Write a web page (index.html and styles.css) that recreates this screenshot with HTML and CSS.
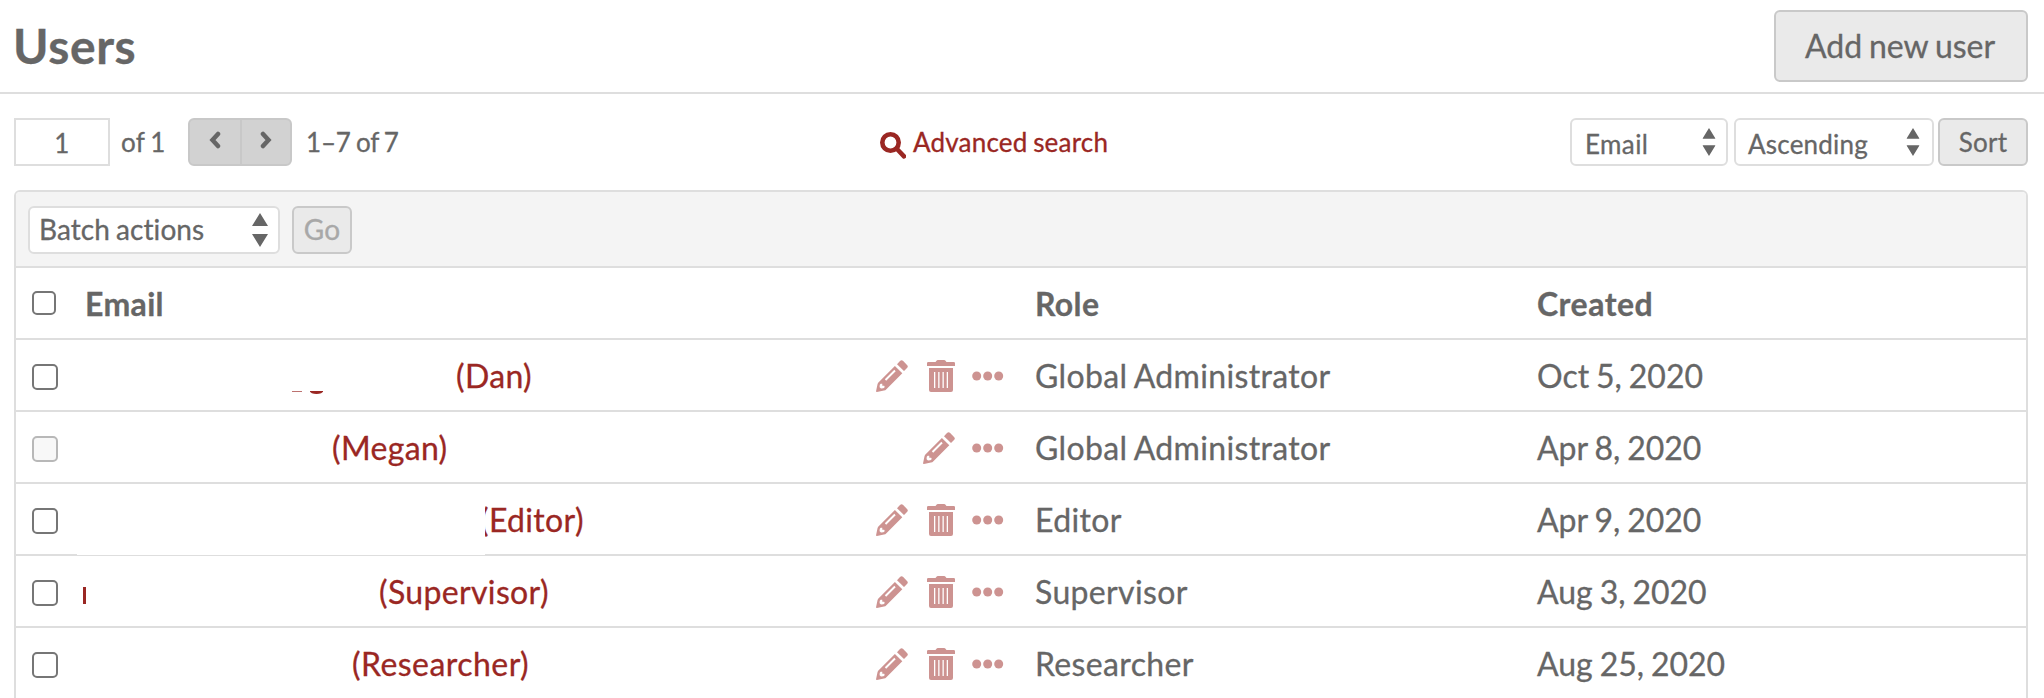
FILE: index.html
```html
<!DOCTYPE html>
<html lang="en">
<head>
<meta charset="utf-8">
<title>Users</title>
<link rel="stylesheet" href="styles.css">
</head>
<body>
<svg class="defs" width="0" height="0">
  <symbol id="pencil" viewBox="0 0 32 32">
    <path d="M21 4.2 24 1.1Q25.6-.4 27.2 1.1L31 4.9Q32.6 6.5 31 8.1L28 11.1Z"/>
    <path fill-rule="evenodd" d="M18.9 6 26.3 13.3 10.4 29.2Q9.4 30.3 8 30.6L.9 32Q0 32.1.1 31.1L1.5 24.300Q1.800 23 2.900 22ZM18.300 9.800 8.800 19.300 10.200 20.700 19.700 11.200ZM4.700 23.700Q3.700 24.300 3.700 25.300L3.600 27.300 5 28.600 7.300 28.300Q8.300 28.100 8.700 27L8.200 25.700 6.300 25.800 6.300 23.800Z"/>
  </symbol>
  <symbol id="trash" viewBox="0 0 28 32">
    <path d="M1.200 2H8.500L9.700.4Q10 0 10.700 0H17.300Q18 0 18.300.4L19.500 2H26.800Q28 2 28 3.200V6H0V3.200Q0 2 1.200 2Z"/>
    <path fill-rule="evenodd" d="M2 8H26V30Q26 32 24 32H4Q2 32 2 30ZM7 12V28H8.300V12ZM11.200 12V28H12.500V12ZM15.500 12V28H16.800V12ZM19.700 12V28H21V12Z"/>
  </symbol>
  <symbol id="dots" viewBox="0 0 32 10">
    <circle cx="4.700" cy="5" r="4.500"/><circle cx="15.700" cy="5" r="4.500"/><circle cx="26.700" cy="5" r="4.500"/>
  </symbol>
  <symbol id="arrows" viewBox="0 0 16 34">
    <path d="M8 0 16 13H0ZM8 34 0 21H16Z"/>
  </symbol>
</svg>

<header class="top">
  <h1 class="title">Users</h1>
  <button class="btn btn-add">Add new user</button>
</header>

<div class="controls">
  <div class="pager">
    <div class="page-input">1</div>
    <span class="of">of 1</span>
    <div class="prevnext">
      <span class="step"><svg width="12" height="18" viewBox="0 0 12 18"><path d="M9 3 3.500 9 9 15"/></svg></span>
      <span class="step next"><svg width="12" height="18" viewBox="0 0 12 18"><path d="M3 3 8.500 9 3 15"/></svg></span>
    </div>
    <span class="range">1–7 of 7</span>
  </div>
  <a class="advanced"><svg class="lens" width="26" height="27" viewBox="0 0 26 27"><circle cx="10.500" cy="10.500" r="8.200"/><path d="M17 17 24 24.300"/></svg><span>Advanced search</span></a>
  <div class="sorting">
    <div class="select select-field"><span>Email</span><svg class="arrows" width="14" height="28" viewBox="0 0 16 34"><use href="#arrows"/></svg></div>
    <div class="select select-order"><span>Ascending</span><svg class="arrows" width="14" height="28" viewBox="0 0 16 34"><use href="#arrows"/></svg></div>
    <button class="btn btn-sort">Sort</button>
  </div>
</div>

<main class="panel">
  <div class="batch">
    <div class="select select-batch"><span>Batch actions</span><svg class="arrows" width="16" height="34"><use href="#arrows"/></svg></div>
    <button class="btn btn-go" disabled>Go</button>
  </div>
  <div class="row head">
    <div class="check"><span class="box small"></span></div>
    <div class="email">Email</div>
    <div class="role">Role</div>
    <div class="created">Created</div>
  </div>
  <div class="row">
    <div class="check"><span class="box"></span></div>
    <div class="email"><i class="trace trace-a"></i><i class="trace trace-b"></i><a class="name dan">(Dan)</a>
      <div class="actions"><svg class="wide" width="32" height="32"><use href="#pencil"/></svg><svg width="28" height="32"><use href="#trash"/></svg><svg width="32" height="10"><use href="#dots"/></svg></div></div>
    <div class="role">Global Administrator</div>
    <div class="created">Oct 5, 2020</div>
  </div>
  <div class="row">
    <div class="check"><span class="box off"></span></div>
    <div class="email"><a class="name megan">(Megan)</a>
      <div class="actions"><svg width="32" height="32"><use href="#pencil"/></svg><svg width="32" height="10"><use href="#dots"/></svg></div></div>
    <div class="role">Global Administrator</div>
    <div class="created">Apr 8, 2020</div>
  </div>
  <div class="row">
    <div class="check"><span class="box"></span></div>
    <div class="email"><a class="name editor">(Editor)</a><i class="cover"></i>
      <div class="actions"><svg class="wide" width="32" height="32"><use href="#pencil"/></svg><svg width="28" height="32"><use href="#trash"/></svg><svg width="32" height="10"><use href="#dots"/></svg></div></div>
    <div class="role">Editor</div>
    <div class="created">Apr 9, 2020</div>
  </div>
  <div class="row">
    <div class="check"><span class="box"></span></div>
    <div class="email"><i class="trace trace-c"></i><a class="name supervisor">(Supervisor)</a>
      <div class="actions"><svg class="wide" width="32" height="32"><use href="#pencil"/></svg><svg width="28" height="32"><use href="#trash"/></svg><svg width="32" height="10"><use href="#dots"/></svg></div></div>
    <div class="role">Supervisor</div>
    <div class="created">Aug 3, 2020</div>
  </div>
  <div class="row">
    <div class="check"><span class="box"></span></div>
    <div class="email"><a class="name researcher">(Researcher)</a>
      <div class="actions"><svg class="wide" width="32" height="32"><use href="#pencil"/></svg><svg width="28" height="32"><use href="#trash"/></svg><svg width="32" height="10"><use href="#dots"/></svg></div></div>
    <div class="role">Researcher</div>
    <div class="created">Aug 25, 2020</div>
  </div>
</main>
</body>
</html>
```
FILE: styles.css
```css
* { box-sizing: border-box; }
body {
  margin: 0;
  height: 698px;
  overflow: hidden;
  background: #fff;
  color: #666;
  font: 26px/34px Lato, sans-serif;
  letter-spacing: .2px;
  word-spacing: -1.200px;
  white-space: nowrap;
  -webkit-text-stroke: .3px;
}
.defs { position: absolute; }
svg { display: block; flex: none; }
.top {
  display: flex;
  justify-content: space-between;
  align-items: center;
  height: 94px;
  padding: 0 16px 0 13px;
  border-bottom: 2px solid #dedede;
}
.title { margin: 0; font-size: 48px; line-height: 58px; font-weight: 700; letter-spacing: .6px; }
.btn {
  padding: 0;
  border: 2px solid #c9c9c9;
  border-radius: 6px;
  background: #eaeaea;
  color: #666;
  font: 26px/34px Lato, sans-serif;
  letter-spacing: .2px;
  word-spacing: -1.200px;
}
.btn-add { width: 254px; height: 72px; padding-right: 2px; font-size: 32px; letter-spacing: -.03px; }
.controls {
  display: grid;
  grid-template-columns: 866px 1fr auto;
  align-items: center;
  height: 96px;
  padding: 0 16px 0 14px;
}
.pager { display: flex; align-items: center; }
.page-input {
  width: 96px;
  height: 48px;
  border: 2px solid #dedede;
  line-height: 46px;
  text-align: center;
}
.of { width: 78px; padding-left: 11px; }
.prevnext {
  display: flex;
  width: 104px;
  height: 48px;
  border: 2px solid #c8c8c8;
  border-radius: 6px;
  background: #d2d2d2;
}
.step { display: flex; flex: none; width: 50px; justify-content: center; padding-top: 11px; }
.next { border-left: 2px solid #c8c8c8; }
.step path { fill: none; stroke: #666; stroke-width: 4.500; stroke-linecap: round; }
.range { margin-left: 14px; letter-spacing: -.2px; }
.advanced { display: flex; align-items: center; gap: 7px; color: #9a2723; }
.lens { margin-top: 7px; fill: none; stroke: #9a2723; stroke-width: 4.600; stroke-linecap: round; }
.sorting { display: flex; justify-content: flex-end; }
.select {
  display: flex;
  justify-content: space-between;
  align-items: center;
  height: 48px;
  padding: 0 10px 0 13px;
  border: 2px solid #dedede;
  border-radius: 6px;
  background: #fff;
}
.arrows { fill: #666; }
.select-field { width: 158px; margin-right: 6px; padding-top: 4px; letter-spacing: .4px; }
.select-order { width: 200px; margin-right: 4px; padding: 4px 12px 0 12px; }
.sorting .arrows { margin-top: -5px; }
.btn-sort { width: 90px; height: 48px; }
.panel {
  width: 2014px;
  height: 520px;
  margin-left: 14px;
  border: 2px solid #dedede;
  border-radius: 6px 6px 0 0;
  font-size: 32px;
  letter-spacing: .35px;
}
.batch {
  display: flex;
  align-items: flex-start;
  gap: 12px;
  height: 76px;
  padding: 14px 12px 0 12px;
  border-bottom: 2px solid #dedede;
  border-radius: 4px 4px 0 0;
  background: #f4f4f4;
}
.select-batch { width: 252px; padding: 0 10px 2px 9px; font-size: 28px; letter-spacing: .08px; }
.select-batch .arrows { margin-top: 1px; }
.btn-go { width: 60px; height: 48px; padding-bottom: 2px; font-size: 28px; color: #a8a8a8; }
.row {
  display: grid;
  grid-template-columns: 69px 951px 501px 1fr;
  align-items: center;
  height: 72px;
  border-bottom: 2px solid #dedede;
}
.head { font-weight: 700; }
.check { padding-left: 16px; }
.box {
  display: block;
  width: 26px;
  height: 26px;
  margin-top: 4px;
  border: 2px solid #767676;
  border-radius: 5px;
}
.small { width: 24px; height: 24px; margin-top: 0; }
.off { border-color: #b8b8b8; background: #f8f8f8; }
.email { position: relative; display: flex; align-items: center; height: 70px; }
.role, .created, .name { padding-top: 2px; }
.role { margin-left: -1px; }
.head .email { padding-top: 2px; }
.created { letter-spacing: -.02px; }
.head .created { letter-spacing: .5px; }
.name { color: #9a2723; }
.dan { margin-left: 371px; }
.megan { margin-left: 247px; }
.editor { margin-left: 395px; }
.supervisor { margin-left: 294px; }
.researcher { margin-left: 267px; letter-spacing: .45px; }
.actions {
  display: flex;
  align-items: center;
  gap: 17px;
  height: 32px;
  margin: 2px 32px 0 auto;
  fill: #cd9391;
}
.wide { margin-right: 2px; }
.trace { position: absolute; background: #9a2723; }
.trace-a { left: 207px; top: 51px; width: 10px; height: 1px; opacity: .65; }
.trace-b { left: 225px; top: 51px; width: 13px; height: 3px; border-radius: 0 0 7px 7px / 0 0 3px 3px; }
.trace-c { left: -2px; top: 31px; width: 3px; height: 17px; }
.cover { position: absolute; left: -8px; top: 0; width: 408px; height: 71px; background: #fff; }
```
